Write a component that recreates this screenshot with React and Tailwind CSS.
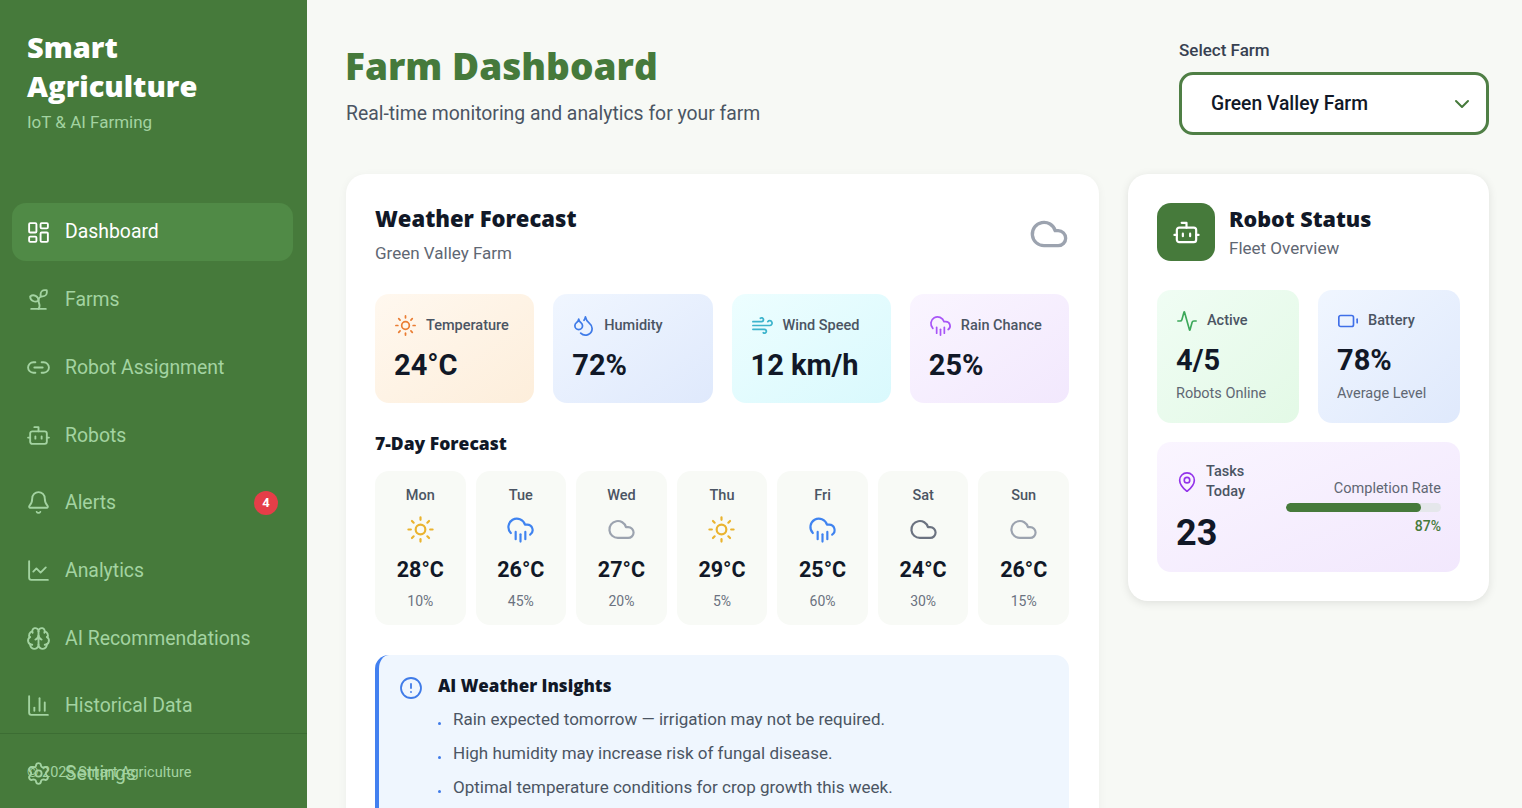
import React from "react";
import {
  Activity, Battery, Bell, Bot, Brain, ChartColumn, ChartLine, ChevronDown, CircleAlert, Cloud, CloudRain,
  Droplets, LayoutDashboard, Link2, MapPin, Settings, Sprout, Sun, Wind,
} from "lucide-react";

const NAV_ITEMS = [
  { label: "Dashboard", icon: LayoutDashboard, active: true },
  { label: "Farms", icon: Sprout },
  { label: "Robot Assignment", icon: Link2 },
  { label: "Robots", icon: Bot },
  { label: "Alerts", icon: Bell, badge: 4 },
  { label: "Analytics", icon: ChartLine },
  { label: "AI Recommendations", icon: Brain },
  { label: "Historical Data", icon: ChartColumn },
  { label: "Settings", icon: Settings },
];

const STATS = [
  { label: "Temperature", value: "24°C", icon: Sun, iconClass: "text-[#ea7d33]", bg: "from-[#fff8ef] to-[#fdeedb]" },
  { label: "Humidity", value: "72%", icon: Droplets, iconClass: "text-[#3f7be8]", bg: "from-[#f0f6ff] to-[#dfe9fc]" },
  { label: "Wind Speed", value: "12 km/h", icon: Wind, iconClass: "text-[#3cb4cc]", bg: "from-[#edfeff] to-[#d9f9fd]" },
  { label: "Rain Chance", value: "25%", icon: CloudRain, iconClass: "text-[#a855f7]", bg: "from-[#faf5ff] to-[#f2e8fd]" },
];

const FORECAST = [
  { day: "Mon", temp: "28°C", rain: "10%", icon: Sun, iconClass: "text-[#eab32e]" },
  { day: "Tue", temp: "26°C", rain: "45%", icon: CloudRain, iconClass: "text-[#3f83f0]" },
  { day: "Wed", temp: "27°C", rain: "20%", icon: Cloud, iconClass: "text-[#9ca3af]" },
  { day: "Thu", temp: "29°C", rain: "5%", icon: Sun, iconClass: "text-[#eab32e]" },
  { day: "Fri", temp: "25°C", rain: "60%", icon: CloudRain, iconClass: "text-[#3f83f0]" },
  { day: "Sat", temp: "24°C", rain: "30%", icon: Cloud, iconClass: "text-[#6b7280]" },
  { day: "Sun", temp: "26°C", rain: "15%", icon: Cloud, iconClass: "text-[#9ca3af]" },
];

const INSIGHTS = [
  "Rain expected tomorrow — irrigation may not be required.",
  "High humidity may increase risk of fungal disease.",
  "Optimal temperature conditions for crop growth this week.",
];

const HEADING = "font-['Open_Sans',sans-serif] font-extrabold";

function Sidebar() {
  return (
    <aside className="relative h-[808px] w-[307px] shrink-0 overflow-hidden bg-[#467a3b]">
      <div className="px-[27px] pt-[27px]">
        <h1 className={`${HEADING} text-[29px] leading-[39px] text-white`}>
          Smart
          <br />
          Agriculture
        </h1>
        <p className="mt-[6px] text-[17px] leading-[22px] text-[#a3d3a1]">IoT &amp; AI Farming</p>
      </div>
      <nav className="mt-[70px] flex flex-col gap-[9.7px] px-[12px]">
        {NAV_ITEMS.map(({ label, icon: Icon, active, badge }) => (
          <div
            key={label}
            className={`flex h-[58px] w-[281px] shrink-0 items-center gap-[14px] rounded-[14px] pl-[14px] pr-[15px] ${
              active ? "bg-[#508a46] text-white" : "text-[#a3d3a1]"
            }`}
          >
            <Icon size={25} strokeWidth={1.8} className="shrink-0" />
            <span className="flex-1 text-[19.4px]">{label}</span>
            {badge && (
              <span className="flex h-[24px] w-[24px] items-center justify-center rounded-full bg-[#e53e48] text-[13px] font-bold text-white">
                {badge}
              </span>
            )}
          </div>
        ))}
      </nav>
      <div className="absolute bottom-0 left-0 h-[75px] w-full border-t border-[#3c6d33] px-[27px] pt-[29px] text-[14.5px] leading-[20px] text-[#a3d3a1]">
        © 2025 Smart Agriculture
      </div>
    </aside>
  );
}

function StatCard({ stat }) {
  const Icon = stat.icon;
  return (
    <div className={`h-[109px] rounded-[14px] bg-gradient-to-br px-[19px] pt-[20px] ${stat.bg}`}>
      <div className="flex items-center gap-[9px]">
        <Icon size={23} strokeWidth={1.8} className={stat.iconClass} />
        <span className="text-[14.5px] font-medium text-[#4b5563]">{stat.label}</span>
      </div>
      <div className="mt-[9px] text-[29px] font-bold leading-[38px] text-[#111827]">{stat.value}</div>
    </div>
  );
}

function WeatherCard() {
  return (
    <section className="h-[800px] w-[753px] shrink-0 rounded-[20px] bg-white pl-[29px] pr-[30px] pt-[28px] shadow-[0_2px_10px_rgba(0,0,0,0.05)]">
      <div className="flex items-center justify-between">
        <div>
          <h2 className={`${HEADING} text-[22px] leading-[32px] text-[#111827]`}>Weather Forecast</h2>
          <p className="mt-[7px] text-[17px] leading-[24px] text-[#5f6773]">Green Valley Farm</p>
        </div>
        <Cloud size={40} strokeWidth={2} className="text-[#9ca3af]" />
      </div>
      <div className="mt-[29px] grid grid-cols-4 gap-[19px]">
        {STATS.map((stat) => (
          <StatCard key={stat.label} stat={stat} />
        ))}
      </div>
      <h3 className={`${HEADING} mt-[27px] text-[17.5px] leading-[26px] text-[#111827]`}>7-Day Forecast</h3>
      <div className="mt-[15px] grid grid-cols-7 gap-[10px]">
        {FORECAST.map(({ day, temp, rain, icon: Icon, iconClass }) => (
          <div key={day} className="flex h-[154px] flex-col items-center rounded-[14px] bg-[#f8faf6] pt-[15px]">
            <span className="text-[14.5px] font-medium leading-[20px] text-[#4b5563]">{day}</span>
            <Icon size={29} strokeWidth={1.8} className={`mt-[9px] ${iconClass}`} />
            <span className="mt-[11px] text-[21.5px] font-bold leading-[30px] text-[#111827]">{temp}</span>
            <span className="mt-[6px] text-[14px] leading-[20px] text-[#6b7280]">{rain}</span>
          </div>
        ))}
      </div>
      <div className="mt-[30px] rounded-[14px] border-l-4 border-[#4280f0] bg-[#eff6fe] pl-[20px] pr-[20px] pt-[16px]">
        <div className="flex items-center gap-[15px]">
          <CircleAlert size={24} strokeWidth={1.8} className="mt-[5px] text-[#3f7be8]" />
          <h4 className={`${HEADING} text-[17px] leading-[26px] text-[#111827]`}>AI Weather Insights</h4>
        </div>
        <ul className="mt-[6px] flex flex-col gap-[8px] pb-[30px] pl-[39px]">
          {INSIGHTS.map((text) => (
            <li key={text} className="flex items-center gap-[12px] text-[17px] leading-[26px] text-[#4b5563]">
              <span className="mt-[8px] h-[3px] w-[3px] rounded-full bg-[#3f7be8]" />
              {text}
            </li>
          ))}
        </ul>
      </div>
    </section>
  );
}

function RobotCard() {
  return (
    <section className="h-[427px] w-[361px] shrink-0 rounded-[20px] bg-white px-[29px] pt-[29px] shadow-[0_2px_10px_rgba(0,0,0,0.1)]">
      <div className="flex items-center gap-[14px]">
        <div className="flex h-[58px] w-[58px] items-center justify-center rounded-[14px] bg-[#467a3b] text-white">
          <Bot size={29} strokeWidth={1.8} />
        </div>
        <div>
          <h2 className={`${HEADING} text-[21.5px] leading-[30px] text-[#111827]`}>Robot Status</h2>
          <p className="mt-[2px] text-[17px] leading-[24px] text-[#5f6773]">Fleet Overview</p>
        </div>
      </div>
      <div className="mt-[29px] grid grid-cols-2 gap-[19px]">
        <div className="h-[133px] rounded-[14px] bg-gradient-to-br from-[#f0fdf4] to-[#e3f9e6] px-[19px] pt-[20px]">
          <div className="flex items-center gap-[9px]">
            <Activity size={22} strokeWidth={1.8} className="text-[#3ca85a]" />
            <span className="text-[14.5px] font-medium text-[#4b5563]">Active</span>
          </div>
          <div className="mt-[9px] text-[29px] font-bold leading-[38px] text-[#111827]">4/5</div>
          <div className="mt-[4px] text-[14.5px] leading-[22px] text-[#5f6773]">Robots Online</div>
        </div>
        <div className="h-[133px] rounded-[14px] bg-gradient-to-br from-[#f0f6ff] to-[#dfe9fc] px-[19px] pt-[20px]">
          <div className="flex items-center gap-[9px]">
            <Battery size={22} strokeWidth={1.8} className="text-[#3f6fe8]" />
            <span className="text-[14.5px] font-medium text-[#4b5563]">Battery</span>
          </div>
          <div className="mt-[9px] text-[29px] font-bold leading-[38px] text-[#111827]">78%</div>
          <div className="mt-[4px] text-[14.5px] leading-[22px] text-[#5f6773]">Average Level</div>
        </div>
      </div>
      <div className="mt-[19px] flex h-[130px] justify-between rounded-[14px] bg-gradient-to-br from-[#faf5ff] to-[#f2e8fd] px-[19px] pt-[20px]">
        <div>
          <div className="flex items-center gap-[8px]">
            <MapPin size={22} strokeWidth={1.8} className="text-[#9333ea]" />
            <span className="text-[14.5px] font-medium leading-[20px] text-[#4b5563]">
              Tasks
              <br />
              Today
            </span>
          </div>
          <div className="mt-[9px] text-[36px] font-bold leading-[44px] text-[#111827]">23</div>
        </div>
        <div className="w-[155px] pt-[17px] text-right">
          <div className="text-[14.5px] leading-[20px] text-[#5f6773]">Completion Rate</div>
          <div className="mt-[4px] h-[9px] w-full overflow-hidden rounded-full bg-[#e5e7eb]">
            <div className="h-full w-[87%] rounded-full bg-[#467a3b]" />
          </div>
          <div className="mt-[4px] text-[14px] font-medium leading-[20px] text-[#467a3b]">87%</div>
        </div>
      </div>
    </section>
  );
}

export default function App() {
  return (
    <div className="flex h-[808px] w-[1522px] overflow-hidden bg-[#f7f9f5] font-['Roboto',sans-serif]">
      <Sidebar />
      <main className="flex-1 overflow-hidden pl-[39px] pr-[33px] pt-[41px]">
        <header className="flex items-start justify-between">
          <div>
            <h1 className={`${HEADING} -ml-[1px] text-[37px] leading-[50px] text-[#467a3b]`}>Farm Dashboard</h1>
            <p className="mt-[9px] text-[19.35px] leading-[28px] text-[#4b5563]">
              Real-time monitoring and analytics for your farm
            </p>
          </div>
          <div className="w-[310px]">
            <div className="text-[17px] font-medium leading-[18px] text-[#374151]">Select Farm</div>
            <div className="mt-[13px] flex h-[63px] items-center justify-between rounded-[14px] border-[3px] border-[#4f7f45] bg-white pl-[29px] pr-[12px]">
              <span className="pt-[2px] text-[19.3px] font-medium text-[#111827]">Green Valley Farm</span>
              <ChevronDown size={24} strokeWidth={2} className="text-[#467a3b]" />
            </div>
          </div>
        </header>
        <div className="mt-[39px] flex items-start gap-[29px]">
          <WeatherCard />
          <RobotCard />
        </div>
      </main>
    </div>
  );
}
